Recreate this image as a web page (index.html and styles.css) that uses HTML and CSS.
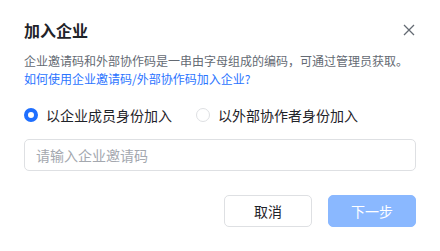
FILE: index.html
```html
<!DOCTYPE html>
<html lang="zh-CN">
<head>
  <meta charset="UTF-8">
  <title>加入企业</title>
  <link rel="stylesheet" href="styles.css">
</head>
<body>
  <div class="dialog">
    <div class="header">
      <h2 class="title">加入企业</h2>
      <button class="close" type="button" aria-label="关闭">
        <svg width="12" height="12" viewBox="0 0 12 12"><path d="M1 1L11 11M11 1L1 11" stroke="#646a73" stroke-width="1.3" fill="none"/></svg>
      </button>
    </div>
    <p class="desc">企业邀请码和外部协作码是一串由字母组成的编码，可通过管理员获取。<br><a href="#" class="link">如何使用企业邀请码/外部协作码加入企业?</a></p>
    <div class="radios">
      <label class="radio"><span class="dot checked"></span>以企业成员身份加入</label>
      <label class="radio"><span class="dot"></span>以外部协作者身份加入</label>
    </div>
    <input class="code-input" type="text" placeholder="请输入企业邀请码">
    <div class="footer">
      <button class="btn" type="button">取消</button>
      <button class="btn primary" type="button" disabled>下一步</button>
    </div>
  </div>
</body>
</html>
```

FILE: styles.css
```css
body { margin: 0; background: #fff; font-family: "Noto Sans CJK SC", "Liberation Sans", sans-serif; color: #1f2329; }
.dialog { padding: 18px 24px 24px; }
.header { display: flex; align-items: center; justify-content: space-between; height: 24px; }
.title { margin: 0; font-size: 16px; font-weight: bold; line-height: 24px; }
.close { border: 0; background: none; padding: 0; width: 20px; height: 20px; display: flex; align-items: center; justify-content: center; margin-right: -3px; }
.desc { margin: 10px 0 0; font-size: 12px; line-height: 18px; color: #646a73; }
.link { color: #2b74ff; text-decoration: none; }
.radios { display: flex; gap: 24px; margin-top: 16px; height: 22px; align-items: center; }
.radio { display: flex; align-items: center; font-size: 14px; color: #1f2329; }
.dot { width: 14px; height: 14px; box-sizing: border-box; border: 1px solid #dee0e3; border-radius: 50%; margin-right: 8px; }
.dot.checked { border: 4px solid #1f6fff; }
.code-input { display: block; box-sizing: border-box; width: 100%; height: 32px; margin-top: 13px; padding: 0 11px; border: 1px solid #dee0e3; border-radius: 5px; font-family: inherit; font-size: 14px; outline: none; }
.code-input::placeholder { color: #a4a8af; }
.footer { display: flex; justify-content: flex-end; gap: 16px; margin-top: 24px; }
.btn { width: 88px; height: 32px; border: 1px solid #dee0e3; border-radius: 5px; background: #fff; font-family: inherit; font-size: 14px; color: #1f2329; }
.btn.primary { border-color: #8ab8ff; background: #8ab8ff; color: #fff; }
```
